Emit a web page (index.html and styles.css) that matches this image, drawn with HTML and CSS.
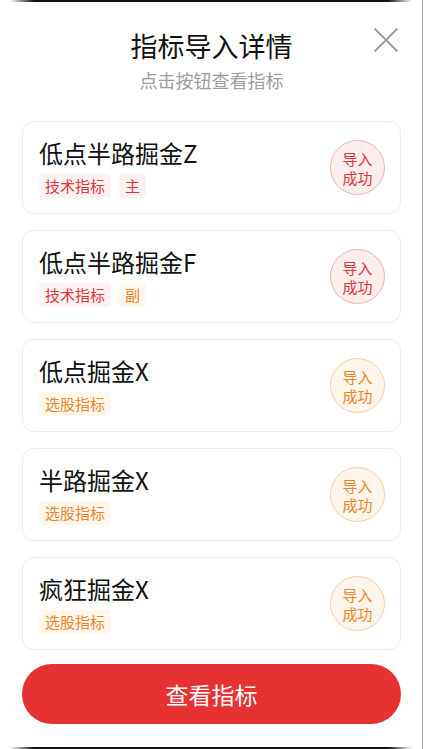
FILE: index.html
```html
<!DOCTYPE html>
<html lang="zh">
<head>
    <meta charset="UTF-8">
    <meta name="viewport" content="width=device-width, initial-scale=1.0">
    <title>指标导入详情</title>
    <link rel="stylesheet" href="styles.css">
</head>
<body>

    <div class="sheet">
        <div class="header">
            <h1 class="title">指标导入详情</h1>
            <p class="subtitle">点击按钮查看指标</p>
            <span class="close">
                <svg width="26" height="26" viewBox="0 0 26 26">
                    <path d="M1.5 1.5 L24.5 24.5 M24.5 1.5 L1.5 24.5" stroke="#9a9a9a" stroke-width="1.8" fill="none"/>
                </svg>
            </span>
        </div>

        <div class="list">
            <div class="card">
                <div class="info">
                    <div class="name">低点半路掘金Z</div>
                    <div class="tags">
                        <span class="tag red">技术指标</span>
                        <span class="tag red">主</span>
                    </div>
                </div>
                <div class="badge red">导入<br>成功</div>
            </div>

            <div class="card">
                <div class="info">
                    <div class="name">低点半路掘金F</div>
                    <div class="tags">
                        <span class="tag red">技术指标</span>
                        <span class="tag orange">副</span>
                    </div>
                </div>
                <div class="badge red">导入<br>成功</div>
            </div>

            <div class="card">
                <div class="info">
                    <div class="name">低点掘金X</div>
                    <div class="tags">
                        <span class="tag orange">选股指标</span>
                    </div>
                </div>
                <div class="badge orange">导入<br>成功</div>
            </div>

            <div class="card">
                <div class="info">
                    <div class="name">半路掘金X</div>
                    <div class="tags">
                        <span class="tag orange">选股指标</span>
                    </div>
                </div>
                <div class="badge orange">导入<br>成功</div>
            </div>

            <div class="card">
                <div class="info">
                    <div class="name">疯狂掘金X</div>
                    <div class="tags">
                        <span class="tag orange">选股指标</span>
                    </div>
                </div>
                <div class="badge orange">导入<br>成功</div>
            </div>
        </div>

        <button class="view-btn">查看指标</button>
    </div>

</body>
</html>
```

FILE: styles.css
```css
body {
    font-family: "Noto Sans CJK SC", "Noto Sans", sans-serif;
    background-color: #fff;
    margin: 0;
    padding: 0;
}
.sheet {
    position: relative;
    box-sizing: border-box;
    width: 423px;
    height: 749px;
    padding: 29px 21px 0 22px;
    background: #fff;
    border-right: 1px solid #a8a8a8;
}
/* dark edges of the page behind the sheet */
.sheet::before,
.sheet::after {
    content: "";
    position: absolute;
    left: 10px;
    right: 10px;
    height: 2px;
    background: linear-gradient(to right, #fff, #111 6%, #111 94%, #fff);
}
.sheet::before {
    top: 0;
}
.sheet::after {
    bottom: 0;
}
.header {
    text-align: center;
}
.title {
    margin: 0;
    font-size: 27px;
    font-weight: normal;
    line-height: 34px;
    color: #111;
}
.subtitle {
    margin: 5px 0 0;
    font-size: 18px;
    line-height: 24px;
    color: #9c9c9c;
}
.close {
    position: absolute;
    top: 27px;
    right: 23px;
    width: 26px;
    height: 26px;
}
.list {
    margin-top: 29px;
    display: flex;
    flex-direction: column;
    gap: 16px;
}
.card {
    display: flex;
    align-items: center;
    justify-content: space-between;
    padding: 15px 15px 15px 16px;
    border: 1px solid #ececec;
    border-radius: 12px;
}
.name {
    font-size: 24px;
    line-height: 31px;
    color: #111;
}
.tags {
    display: flex;
    gap: 8px;
    margin-top: 6px;
}
.tag {
    height: 24px;
    line-height: 24px;
    padding: 0 6px;
    font-size: 15px;
    border-radius: 4px;
}
.tag.red {
    color: #d9373c;
    background-color: #fdf1f1;
}
.tag.orange {
    color: #e8862a;
    background-color: #fff6ec;
}
.badge {
    box-sizing: border-box;
    width: 55px;
    height: 55px;
    border-radius: 50%;
    display: flex;
    align-items: center;
    justify-content: center;
    text-align: center;
    font-size: 15px;
    line-height: 19px;
}
.badge.red {
    color: #d9373c;
    background-color: #fdeded;
    border: 1px solid #f0b4b4;
}
.badge.orange {
    color: #e8862a;
    background-color: #fff5ea;
    border: 1px solid #f5cfa6;
}
.view-btn {
    display: block;
    width: 100%;
    height: 60px;
    margin-top: 14px;
    border: none;
    border-radius: 30px;
    background-color: #e63232;
    color: #fff;
    font-family: inherit;
    font-size: 23px;
    cursor: pointer;
}
```
